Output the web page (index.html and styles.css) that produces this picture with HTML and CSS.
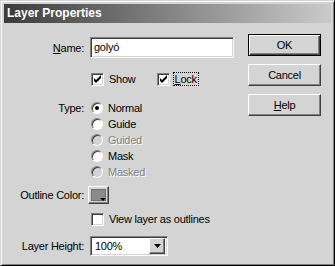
FILE: index.html
```
<!DOCTYPE html>
<html lang="en">
<head>
    <meta charset="UTF-8">
    <title>Layer Properties</title>
    <link rel="stylesheet" href="styles.css">
</head>
<body>
    <div class="window">
        <div class="titlebar">Layer Properties</div>
        <div class="content">
            <div class="form">
                <div class="row row-name">
                    <label class="lbl"><u>N</u>ame:</label>
                    <div class="field sunken">golyó</div>
                </div>
                <div class="row row-show">
                    <span class="lbl"></span>
                    <span class="check sunken"><svg width="9" height="9" viewBox="0 0 9 9"><path d="M1 3v3l2 2 5-5V0L3 5z" fill="#000"/></svg></span>
                    <span class="text">Show</span>
                    <span class="check sunken check-lock"><svg width="9" height="9" viewBox="0 0 9 9"><path d="M1 3v3l2 2 5-5V0L3 5z" fill="#000"/></svg></span>
                    <span class="text focus"><u>L</u>ock</span>
                </div>
                <div class="row-type">
                    <span class="lbl lbl-type">Type:</span>
                    <div class="radios">
                        <div class="radio-row"><span class="radio on"></span><span class="text">Normal</span></div>
                        <div class="radio-row"><span class="radio"></span><span class="text">Guide</span></div>
                        <div class="radio-row disabled"><span class="radio"></span><span class="text">Guided</span></div>
                        <div class="radio-row"><span class="radio"></span><span class="text">Mask</span></div>
                        <div class="radio-row disabled"><span class="radio"></span><span class="text">Masked</span></div>
                    </div>
                </div>
                <div class="row row-color">
                    <span class="lbl">Outline Color:</span>
                    <span class="swatch raised"><span class="swatch-fill"></span><span class="swatch-arrow"></span></span>
                </div>
                <div class="row row-outline">
                    <span class="lbl"></span>
                    <span class="check sunken"></span>
                    <span class="text">View layer as outlines</span>
                </div>
                <div class="row row-height">
                    <span class="lbl">Layer Height:</span>
                    <div class="select sunken">
                        <span class="select-value">100%</span>
                        <span class="select-btn raised"><svg width="7" height="4" viewBox="0 0 7 4"><path d="M0 0h7L3.5 4z" fill="#000"/></svg></span>
                    </div>
                </div>
            </div>
            <div class="buttons">
                <button class="btn default">OK</button>
                <button class="btn">Cancel</button>
                <button class="btn"><u>H</u>elp</button>
            </div>
        </div>
    </div>
</body>
</html>
```
FILE: styles.css
```
* {
    box-sizing: border-box;
}
body {
    margin: 0;
    background-color: #d4d4d4;
    font-family: "Liberation Sans", Arial, sans-serif;
    font-size: 11px;
    letter-spacing: -0.25px;
    color: #000;
}
.window {
    width: 335px;
    height: 266px;
    padding: 3px;
    background-color: #d4d4d4;
    border: 1px solid;
    border-color: #d4d4d4 #000 #000 #d4d4d4;
    box-shadow: inset 1px 1px #fff, inset -1px -1px #808080;
}
.titlebar {
    height: 19px;
    padding: 2px 0 0 3px;
    background: linear-gradient(to right, #3c3c3c, #cacaca);
    color: #fff;
    font-weight: bold;
    font-size: 12px;
    line-height: 15px;
    letter-spacing: 0;
}
.content {
    display: flex;
    justify-content: space-between;
}
.form {
    width: 240px;
}
.row {
    display: flex;
    align-items: center;
}
.lbl {
    width: 80px;
    text-align: right;
    flex-shrink: 0;
    margin-right: 6px;
}
.sunken {
    border: 1px solid;
    border-color: #808080 #fff #fff #808080;
    box-shadow: inset 1px 1px #404040, inset -1px -1px #d4d4d4;
    background-color: #fff;
}
.raised {
    border: 1px solid;
    border-color: #fff #404040 #404040 #fff;
    box-shadow: inset -1px -1px #808080;
    background-color: #d4d4d4;
}
.row-name {
    margin-top: 14px;
    height: 21px;
}
.field {
    width: 144px;
    height: 21px;
    padding: 3px 3px;
    line-height: 13px;
}
.row-show {
    margin-top: 13px;
    height: 16px;
}
.check {
    width: 13px;
    height: 13px;
    display: flex;
    align-items: center;
    justify-content: center;
    margin-left: 1px;
    flex-shrink: 0;
}
.text {
    margin-left: 5px;
}
.check-lock {
    margin-left: 21px;
}
.focus {
    margin-left: 4px;
    padding: 0 1px;
    outline: 1px dotted #000;
}
.row-type {
    display: flex;
    margin-top: 13px;
}
.lbl-type {
    line-height: 16px;
}
.radio-row {
    display: flex;
    align-items: center;
    height: 16px;
}
.radio {
    width: 12px;
    height: 12px;
    margin-left: 1px;
    border-radius: 50%;
    background-color: #fff;
    border: 1px solid;
    border-color: #808080 #fff #fff #808080;
    box-shadow: inset 1px 1px #404040;
    position: relative;
}
.radio.on::after {
    content: "";
    position: absolute;
    left: 3px;
    top: 3px;
    width: 4px;
    height: 4px;
    border-radius: 50%;
    background-color: #000;
}
.disabled .radio {
    background-color: #d4d4d4;
}
.disabled .text {
    color: #808080;
    text-shadow: 1px 1px #fff;
}
.row-color {
    margin-top: 6px;
    height: 18px;
}
.swatch {
    width: 21px;
    height: 18px;
    padding: 2px;
    position: relative;
    margin-left: -2px;
}
.swatch-fill {
    display: block;
    width: 100%;
    height: 100%;
    background-color: #8a8a8a;
    border: 1px solid #707070;
}
.swatch-arrow {
    position: absolute;
    right: 2px;
    bottom: 2px;
    width: 0;
    height: 0;
    border-left: 3px solid transparent;
    border-right: 3px solid transparent;
    border-top: 3px solid #000;
}
.row-outline {
    margin-top: 7px;
    height: 16px;
}
.row-height {
    margin-top: 9px;
    height: 20px;
}
.select {
    width: 78px;
    height: 20px;
    display: flex;
    align-items: center;
    justify-content: space-between;
    padding: 2px;
}
.select-value {
    padding-left: 2px;
}
.select-btn {
    width: 16px;
    height: 16px;
    display: flex;
    align-items: center;
    justify-content: center;
}
.buttons {
    display: flex;
    flex-direction: column;
    gap: 8px;
    margin-top: 11px;
    margin-right: 10px;
}
.btn {
    width: 73px;
    height: 22px;
    font-family: "Liberation Sans", Arial, sans-serif;
    font-size: 11px;
    letter-spacing: -0.25px;
    color: #000;
    background-color: #d4d4d4;
    border: 1px solid;
    border-color: #fff #404040 #404040 #fff;
    box-shadow: inset -1px -1px #808080;
    padding: 0;
}
.btn.default {
    border: 1px solid #000;
    box-shadow: inset 1px 1px #fff, inset -1px -1px #404040, inset -2px -2px #808080;
}
```
